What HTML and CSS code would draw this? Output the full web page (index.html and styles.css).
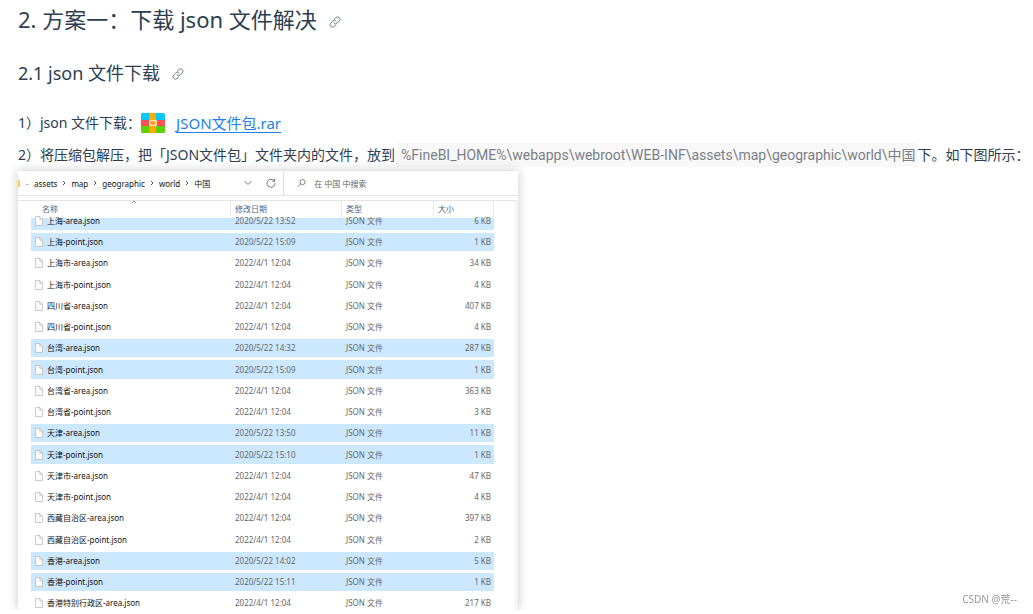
FILE: index.html
```html
<!DOCTYPE html>
<html lang="zh-CN">
<head>
<meta charset="utf-8">
<meta name="viewport" content="width=device-width, initial-scale=1">
<title>下载 json 文件解决</title>
<link rel="stylesheet" href="styles.css">
</head>
<body>
<svg class="sprite" aria-hidden="true">
  <symbol id="link" viewBox="0 0 12 12"><g fill="none" stroke="currentColor" stroke-linecap="round"><path d="M5 3.400 7 1.600a2.300 2.300 0 0 1 3.300 3.300L8.200 7a2.300 2.300 0 0 1-3.300 0"/><path d="M7 8.600 5 10.400a2.300 2.300 0 0 1-3.300-3.300L3.800 5a2.300 2.300 0 0 1 3.300 0"/></g></symbol>
  <symbol id="file" viewBox="0 0 9 11"><path d="M.5.5h5l3 3v7h-8z" fill="#fcfcfc" stroke="#b4b4b4" stroke-width=".8"/><path d="M5.500.5v3h3" fill="none" stroke="#b4b4b4" stroke-width=".8"/></symbol>
  <symbol id="next" viewBox="0 0 4 6"><path d="m1 1 2 2-2 2" fill="none" stroke="#555" stroke-width="1"/></symbol>
</svg>
<main class="article">
  <h2 class="title">2. 方案一：下载 json 文件解决<svg class="anchor"><use href="#link"/></svg></h2>
  <h3 class="subtitle">2.1 json 文件下载<svg class="anchor"><use href="#link"/></svg></h3>
  <p class="step download">1）json 文件下载：
    <svg class="archive" viewBox="0 0 24 20" aria-hidden="true"><clipPath id="r"><rect width="24" height="20" rx="1.500"/></clipPath><g clip-path="url(#r)"><path fill="#06c7ff" d="M0 0h24v7H0z"/><path fill="#ff5058" d="M0 7h24v6H0z"/><path fill="#60d000" d="M0 13h24v7H0z"/><path fill="#ffad05" d="M8.500 0h6.500v20H8.500z"/><rect x="8" y="7" width="8" height="6" rx="1" fill="#ffe4b3"/><rect x="9.500" y="8.500" width="5" height="3" fill="#ff9d00"/></g></svg>
    <a class="file-link" href="#">JSON文件包.rar</a></p>
  <p class="step">2）将压缩包解压，把「JSON文件包」文件夹内的文件，放到<code class="path">%FineBI_HOME%\webapps\webroot\WEB-INF\assets\map\geographic\world\中国</code>下。如下图所示：</p>

  <section class="explorer">
    <div class="toolbar">
      <nav class="crumbs"><i class="folder"></i><span class="dash">-</span>
        <span>assets</span><svg class="next"><use href="#next"/></svg><span>map</span><svg class="next"><use href="#next"/></svg><span>geographic</span><svg class="next"><use href="#next"/></svg><span>world</span><svg class="next"><use href="#next"/></svg><span>中国</span></nav>
      <button class="tool" aria-label="展开"><svg viewBox="0 0 10 10"><path d="m1.500 3 3.500 3.500L8.500 3"/></svg></button>
      <button class="tool" aria-label="刷新"><svg viewBox="0 0 10 10"><path d="M8.300 3A4 4 0 1 0 9 5M8.700.8v2.500H6.200"/></svg></button>
      <label class="search"><svg viewBox="0 0 10 10"><circle cx="6" cy="4" r="2.800"/><path d="M4 6 1 9"/></svg><input type="text" aria-label="搜索" placeholder="在 中国 中搜索"></label>
    </div>
    <div class="list">
      <table class="files">
        <colgroup><col class="c-name"><col class="c-date"><col class="c-type"><col class="c-size"></colgroup>
        <thead><tr><th class="sorted">名称<svg class="caret" viewBox="0 0 6 4"><path d="m1 3 2-2 2 2"/></svg></th><th>修改日期</th><th>类型</th><th>大小</th></tr></thead>
        <tbody id="rows"></tbody>
      </table>
    </div>
  </section>
</main>
<footer class="credit">CSDN @荒--</footer>
<script src="files.js"></script>
</body>
</html>
```

FILE: files.js
```js
const old = '2022/4/1 12:04';
const files = [
  ['上海-area.json', '2020/5/22 13:52', 6, true],
  ['上海-point.json', '2020/5/22 15:09', 1, true],
  ['上海市-area.json', old, 34],
  ['上海市-point.json', old, 4],
  ['四川省-area.json', old, 407],
  ['四川省-point.json', old, 4],
  ['台湾-area.json', '2020/5/22 14:32', 287, true],
  ['台湾-point.json', '2020/5/22 15:09', 1, true],
  ['台湾省-area.json', old, 363],
  ['台湾省-point.json', old, 3],
  ['天津-area.json', '2020/5/22 13:50', 11, true],
  ['天津-point.json', '2020/5/22 15:10', 1, true],
  ['天津市-area.json', old, 47],
  ['天津市-point.json', old, 4],
  ['西藏自治区-area.json', old, 397],
  ['西藏自治区-point.json', old, 2],
  ['香港-area.json', '2020/5/22 14:02', 5, true],
  ['香港-point.json', '2020/5/22 15:11', 1, true],
  ['香港特别行政区-area.json', old, 217]
];
document.getElementById('rows').innerHTML = files.map(([name, date, size, selected]) =>
  `<tr class="${selected ? 'selected' : ''}"><td><div class="name"><svg class="file"><use href="#file"/></svg>${name}</div></td><td>${date}</td><td>JSON 文件</td><td>${size} KB</td></tr>`
).join('');
```

FILE: styles.css
```css
* { box-sizing: border-box; }
body {
  margin: 0;
  color: #2c3e50;
  background: #fff;
  font-family: "Noto Sans", "Noto Sans CJK SC", sans-serif;
  font-size: 14px;
  overflow-x: hidden;
}
.sprite { display: none; }
.article { padding: 3px 0 0 18px; }
h2, h3, p { margin: 0; white-space: nowrap; }
.title { font-size: 22px; font-weight: 400; line-height: 32px; }
.subtitle { margin-top: 24px; font-size: 18px; font-weight: 400; line-height: 28px; }
.anchor { width: 12px; height: 12px; margin-left: 12px; color: #6f7c8c; }
.step { line-height: 24px; }
.download { display: flex; align-items: center; margin: 24px 0 8px; line-height: 24px; }
.archive { width: 24px; height: 20px; margin: 0 11px 0 0; }
.file-link { color: #1e80e6; font-size: 15px; text-decoration: underline; text-underline-offset: 3px; }
.path {
  display: inline-block;
  margin-left: 2px;
  padding: 0 2px 0 4px;
  background: #f8f8f8;
  color: #7b7f86;
  font-family: Roboto, "Noto Sans CJK SC", sans-serif;
  font-size: 14px;
}
.explorer {
  position: relative;
  width: 500px;
  max-width: 100%;
  margin-top: 4px;
  background: #fff;
  box-shadow: 0 0 10px rgba(30, 40, 50, .25);
  font-size: 8px;
  color: #666;
}
.toolbar { display: flex; align-items: center; height: 25px; border-bottom: 1px solid #e6e6e6; }
.crumbs { display: flex; flex: 0 0 225px; align-items: center; color: #111; }
.folder { width: 2px; height: 7px; background: #ffcf48; }
.dash { width: 14px; padding-left: 6px; color: #888; }
.next { width: 4px; height: 6px; margin: 0 5px; }
.tool { width: 12px; height: 24px; margin-right: 11px; padding: 0; border: 0; background: none; }
.tool + .tool { margin-right: 5px; }
.tool svg, .search svg { display: block; width: 10px; height: 10px; fill: none; stroke: #777; stroke-width: 1; }
.search { display: flex; flex: 1; align-items: center; height: 24px; padding-left: 13px; border-left: 1px solid #ddd; }
.search input { width: 100%; margin-left: 8px; padding: 0; border: 0; background: none; font: inherit; }
.search input::placeholder { color: #666; opacity: 1; }
.list { height: 410px; margin-top: 4px; padding: 0 18px 0 13px; border-top: 1px solid #e4e4e4; border-right: 3px solid #f4f4f4; overflow: hidden; }
.files { width: 463px; table-layout: fixed; border-collapse: separate; border-spacing: 0; line-height: 12px; }
.c-name { width: 200px; }
.c-date { width: 111px; }
.c-type { width: 92px; }
.files th { height: 17px; padding: 0 0 2px 4px; border-right: 1px solid #e8e8e8; color: #52657f; font-weight: 400; text-align: left; }
.files th.sorted { position: relative; padding-left: 11px; }
.caret { position: absolute; top: -1px; left: 100px; width: 6px; height: 4px; fill: none; stroke: #999; }
.files td { height: 21px; padding: 0 0 0 4px; border: solid #fff; border-width: 1px 0 2px; background-clip: padding-box; white-space: nowrap; }
.files tr:nth-child(4n) td { height: 22px; }
.files tbody tr:first-child td { height: 14px; border-top: 0; line-height: 6px; vertical-align: top; }
.files td:last-child { padding-right: 3px; text-align: right; }
.name { display: flex; align-items: center; gap: 4px; color: #111; }
.file { width: 8px; height: 10px; }
.files tbody tr:first-child .name { height: 6px; }
.selected td { background-color: #cce8ff; }
.credit { position: fixed; right: 16px; bottom: 8px; color: #999; font-size: 10px; line-height: 14px; }
```
